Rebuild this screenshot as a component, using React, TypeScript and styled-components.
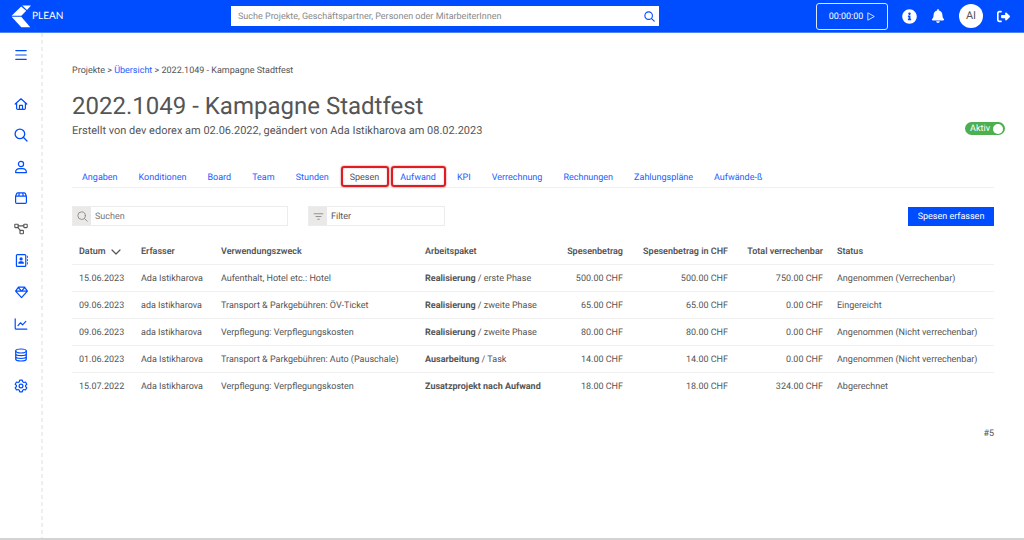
import React from "react";
import styled, { createGlobalStyle } from "styled-components";
import { FaInfoCircle, FaBell } from "react-icons/fa";
import { FaRightFromBracket, FaRegAddressBook, FaRegGem } from "react-icons/fa6";

const blue = "#004dff";
const linkBlue = "#2460ff";
const ink = "#555";
const line = "#f0f0f0";

const Global = createGlobalStyle`
  *, *::before, *::after { box-sizing: border-box; }
  body {
    margin: 0;
    background: #fff;
    color: ${ink};
    font: 9px/14px Roboto, "Liberation Sans", sans-serif;
    text-rendering: geometricPrecision;
  }
  button, input { font: inherit; color: inherit; text-rendering: inherit; }
  button { cursor: pointer; }
  a { color: ${linkBlue}; text-decoration: none; }
`;

const Page = styled.div`
  display: flex;
  flex-direction: column;
  min-height: 100vh;
  border-bottom: 2px solid #d3d3d3;
`;

const TopBar = styled.header`
  display: grid;
  grid-template-columns: 220px minmax(200px, 428px) 1fr;
  align-items: center;
  height: 33px;
  padding: 0 14px 0 11px;
  background: ${blue};
  border-bottom: 1px solid #4c83ff;
`;

const Brand = styled.a`
  display: flex;
  align-items: center;
  gap: 1px;
  color: #fff;
  font: 10px/14px Lato, sans-serif;
`;

const GlobalSearch = styled.form`
  display: flex;
  align-items: center;
  height: 20px;
  padding: 0 4px 0 7px;
  background: #fff;
`;

const BareInput = styled.input`
  flex: 1;
  min-width: 0;
  padding: 1px 0 0;
  border: 0;
  outline: 0;
  background: none;
  &::placeholder { color: #8a8a8a; opacity: 1; }
`;

const IconButton = styled.button`
  display: inline-flex;
  align-items: center;
  justify-content: center;
  padding: 0;
  border: 0;
  background: none;
  color: inherit;
`;

const SearchButton = styled(IconButton)`
  color: ${blue};
`;

const Actions = styled.div`
  display: flex;
  justify-content: flex-end;
  align-items: center;
  gap: 14px;
  color: #fff;
`;

const Timer = styled.button`
  display: flex;
  align-items: center;
  justify-content: center;
  gap: 4px;
  width: 72px;
  height: 27px;
  padding: 1px 0 0;
  border: 1px solid #dbe6ff;
  border-radius: 3px;
  background: none;
  color: #fff;
`;

const Avatar = styled.button`
  width: 24px;
  height: 24px;
  padding: 0;
  border: 0;
  border-radius: 50%;
  background: #fff;
  color: ${ink};
  font-size: 11px;
`;

const Body = styled.div`
  display: flex;
  flex: 1;
`;

const Sidebar = styled.nav`
  flex: none;
  width: 43px;
  padding-top: 15px;
  color: ${blue};
  background: repeating-linear-gradient(#eee 0 4px, transparent 4px 7px) right / 2px 100% no-repeat;
`;

const MenuButton = styled(IconButton)`
  width: 42px;
  height: 14px;
`;

const NavList = styled.ul`
  display: flex;
  flex-direction: column;
  height: 314px;
  margin: 21px 0 0;
  padding: 0;
  list-style: none;
`;

const NavItem = styled.li`
  flex: 1;
  display: flex;
`;

const NavLink = styled.a<{ $current?: boolean }>`
  display: flex;
  align-items: center;
  justify-content: center;
  width: 42px;
  color: ${(p) => (p.$current ? "#555" : blue)};
`;

const Main = styled.main`
  flex: 1;
  min-width: 0;
  padding: 31px 30px 24px 29px;
`;

const Breadcrumb = styled.nav`
  font-size: 9px;
`;

const TitleRow = styled.div`
  display: flex;
  justify-content: space-between;
  align-items: flex-end;
  margin-top: 13px;
`;

const Title = styled.h1`
  margin: 0;
  font-size: 24px;
  font-weight: 400;
  line-height: 30px;
`;

const Meta = styled.p`
  margin: 2px 0 0;
  font-size: 11px;
  line-height: 16px;
`;

const Switch = styled.label`
  display: flex;
  align-items: center;
  justify-content: flex-end;
  gap: 3px;
  width: 40px;
  height: 13px;
  margin: 0 -11px 4px 0;
  padding-right: 2px;
  border-radius: 7px;
  background: #4caf50;
  color: #fff;
  cursor: pointer;
`;

const SwitchInput = styled.input`
  appearance: none;
  width: 10px;
  height: 10px;
  margin: 0;
  border-radius: 50%;
  background: #fff;
`;

const Tabs = styled.nav`
  display: flex;
  height: 22px;
  margin-top: 27px;
  border-bottom: 1px solid ${line};
`;

const Tab = styled.a<{ $current?: boolean; $marked?: boolean }>`
  position: relative;
  padding: 5px 11px 3px 10px;
  white-space: nowrap;
  color: ${(p) => (p.$current ? ink : linkBlue)};
  ${(p) =>
    p.$marked &&
    `&::after {
      content: "";
      position: absolute;
      inset: 0 1px 0 1px;
      border: 2px solid #e01b22;
      border-radius: 3px;
      box-shadow: 0 0 2px rgba(120, 0, 0, 0.6), inset 0 0 2px rgba(120, 0, 0, 0.3);
    }`}
`;

const Toolbar = styled.div`
  display: flex;
  align-items: center;
  gap: 20px;
  margin-top: 18px;
`;

const Field = styled.label<{ $width: number }>`
  display: flex;
  align-items: center;
  width: ${(p) => p.$width}px;
  height: 20px;
  border: 1px solid #ececec;
`;

const FieldIcon = styled.span`
  display: flex;
  align-items: center;
  justify-content: center;
  width: 18px;
  height: 18px;
  margin-right: 4px;
  background: #ebe9e7;
  color: #8c8c8c;
`;

const FieldInput = styled(BareInput)`
  &::placeholder { color: #757575; }
`;

const FilterInput = styled(BareInput)`
  &::placeholder { color: ${ink}; }
`;

const Primary = styled.button`
  margin-left: auto;
  width: 86px;
  height: 19px;
  padding: 1px 0 0;
  border: 0;
  background: ${blue};
  color: #fff;
`;

const Table = styled.table`
  width: 100%;
  margin-top: 12px;
  table-layout: fixed;
  border-collapse: collapse;
`;

const Col = styled.col<{ $w?: number }>`
  width: ${(p) => (p.$w ? `${p.$w}px` : "auto")};
`;

const Th = styled.th<{ $num?: boolean }>`
  height: 26px;
  padding: 2px 7px 0;
  text-align: ${(p) => (p.$num ? "right" : "left")};
  font-weight: 600;
  white-space: nowrap;
`;

const Td = styled.td<{ $num?: boolean }>`
  height: 27px;
  padding: 2px 7px 0;
  border-top: 1px solid ${line};
  text-align: ${(p) => (p.$num ? "right" : "left")};
  white-space: nowrap;
`;

const SortButton = styled(IconButton)`
  gap: 5px;
  font-weight: 600;
`;

const Count = styled.p`
  margin: 28px 0 0;
  text-align: right;
`;

const Glyph = ({ size = 14, w = 1.2, children }: { size?: number; w?: number; children: React.ReactNode }) => (
  <svg width={size} height={size} viewBox="0 0 14 14" fill="none" stroke="currentColor" strokeWidth={w} strokeLinecap="round" strokeLinejoin="round" aria-hidden="true">
    {children}
  </svg>
);

const SearchGlyph = ({ size = 14, w = 1.2 }: { size?: number; w?: number }) => (
  <Glyph size={size} w={w}>
    <circle cx="5.9" cy="5.9" r="4.8" />
    <path d="M9.3 9.3 13 13" />
  </Glyph>
);

const navigation = [
  { label: "Start", icon: <Glyph><path d="M1.2 7 7 1.8 12.8 7M2.6 6v5.2q0 1.2 1.2 1.2h6.4q1.2 0 1.2-1.2V6M5.5 12.2V8.3h3v3.9" /></Glyph> },
  { label: "Suche", icon: <SearchGlyph w={1.3} /> },
  { label: "Personen", icon: <Glyph><circle cx="7" cy="4" r="2.6" /><path d="M1.6 12.6c0-2.4 1.8-3.9 4-3.9h2.8c2.2 0 4 1.5 4 3.9Z" /></Glyph> },
  { label: "Produkte", icon: <Glyph><path d="M1.6 5.2v6q0 1.2 1.2 1.2h8.4q1.2 0 1.2-1.2v-6L11.3 2.6q-.3-.8-1.2-.8H3.9q-.9 0-1.2.8ZM1.6 5.2h10.8M5.2 1.9l-.4 3.3M8.8 1.9l.4 3.3" /></Glyph> },
  { label: "Projekte", current: true, icon: <Glyph w={1.1}><rect x=".8" y="2.2" width="3.4" height="3.4" rx=".5" /><rect x="9.8" y="2.2" width="3.4" height="3.4" rx=".5" /><rect x="6" y="8.4" width="3.4" height="3.4" rx=".5" /><path d="M4.2 3.9h5.6M3.8 5.4 6.4 8.6" /></Glyph> },
  { label: "Kontakte", icon: <FaRegAddressBook size={13} /> },
  { label: "Angebote", icon: <FaRegGem size={13} /> },
  { label: "Auswertungen", icon: <Glyph><path d="M1.2 1.8v9.4q0 1 1 1h10.6M4 8.6l2.4-2.8 2.2 2 3.2-3.4" /></Glyph> },
  { label: "Daten", icon: <Glyph><ellipse cx="7" cy="3" rx="5.3" ry="2" /><path d="M1.7 3v8c0 1.1 2.4 2 5.3 2s5.3-.9 5.3-2V3M1.7 5.8c0 1.1 2.4 1.9 5.3 1.9s5.3-.8 5.3-1.9M1.7 8.6c0 1.1 2.4 1.9 5.3 1.9s5.3-.8 5.3-1.9" /></Glyph> },
  { label: "Einstellungen", icon: <Glyph><path d="M5.7 1.2h2.6l.4 1.6 1.2.7 1.6-.5 1.3 2.3L11.6 6.4v1.2l1.2 1.1-1.3 2.3-1.6-.5-1.2.7-.4 1.6H5.7l-.4-1.6-1.2-.7-1.6.5-1.3-2.3 1.2-1.1V6.4L1.2 5.3 2.5 3l1.6.5 1.2-.7Z" /><circle cx="7" cy="7" r="1.9" /></Glyph> },
];

const tabs = ["Angaben", "Konditionen", "Board", "Team", "Stunden", "Spesen", "Aufwand", "KPI", "Verrechnung", "Rechnungen", "Zahlungspläne", "Aufwände-ß"];

const rows = [
  ["15.06.2023", "Ada Istikharova", "Aufenthalt, Hotel etc.: Hotel", "Realisierung", " / erste Phase", "500.00", "500.00", "750.00", "Angenommen (Verrechenbar)"],
  ["09.06.2023", "ada Istikharova", "Transport & Parkgebühren: ÖV-Ticket", "Realisierung", " / zweite Phase", "65.00", "65.00", "0.00", "Eingereicht"],
  ["09.06.2023", "ada Istikharova", "Verpflegung: Verpflegungskosten", "Realisierung", " / zweite Phase", "80.00", "80.00", "0.00", "Angenommen (Nicht verrechenbar)"],
  ["01.06.2023", "Ada Istikharova", "Transport & Parkgebühren: Auto (Pauschale)", "Ausarbeitung", " / Task", "14.00", "14.00", "0.00", "Angenommen (Nicht verrechenbar)"],
  ["15.07.2022", "Ada Istikharova", "Verpflegung: Verpflegungskosten", "Zusatzprojekt nach Aufwand", "", "18.00", "18.00", "324.00", "Abgerechnet"],
];

export default function App() {
  return (
    <>
      <Global />
      <Page>
        <TopBar>
          <Brand href="#">
            <svg width="20" height="23" viewBox="0 0 20 23" fill="#fff" aria-hidden="true">
              <path d="M11.2.6H20L16 5Z" />
              <path d="M10.2 1.4 15.2 5.8 10.4 10.8H.6Z" />
              <path d="M.6 11.8h9.6L19.3 22.2h-9Z" />
            </svg>
            PLEAN
          </Brand>
          <GlobalSearch role="search">
            <BareInput type="text" aria-label="Suche" placeholder="Suche Projekte, Geschäftspartner, Personen oder MitarbeiterInnen" />
            <SearchButton type="button" aria-label="Suchen">
              <SearchGlyph size={11} w={1.4} />
            </SearchButton>
          </GlobalSearch>
          <Actions>
            <Timer type="button">
              00:00:00
              <svg width="8" height="9" viewBox="0 0 8 9" fill="none" stroke="#fff" strokeWidth=".8" strokeLinejoin="round" aria-hidden="true">
                <path d="M.8.8v7.4L7.3 4.5Z" />
              </svg>
            </Timer>
            <IconButton type="button" aria-label="Info"><FaInfoCircle size={15} /></IconButton>
            <IconButton type="button" aria-label="Benachrichtigungen"><FaBell size={14} /></IconButton>
            <Avatar type="button">AI</Avatar>
            <IconButton type="button" aria-label="Abmelden"><FaRightFromBracket size={13} /></IconButton>
          </Actions>
        </TopBar>
        <Body>
          <Sidebar aria-label="Hauptnavigation">
            <MenuButton type="button" aria-label="Menü">
              <Glyph><path d="M1.8 2.6h10.4M1.8 7h10.4M1.8 11.4h10.4" /></Glyph>
            </MenuButton>
            <NavList>
              {navigation.map((n) => (
                <NavItem key={n.label}>
                  <NavLink href="#" aria-label={n.label} $current={n.current}>{n.icon}</NavLink>
                </NavItem>
              ))}
            </NavList>
          </Sidebar>
          <Main>
            <Breadcrumb aria-label="Brotkrumen">
              Projekte &gt; <a href="#">Übersicht</a> &gt; 2022.1049 - Kampagne Stadtfest
            </Breadcrumb>
            <TitleRow>
              <div>
                <Title>2022.1049 - Kampagne Stadtfest</Title>
                <Meta>Erstellt von dev edorex am 02.06.2022, geändert von Ada Istikharova am 08.02.2023</Meta>
              </div>
              <Switch>
                Aktiv
                <SwitchInput type="checkbox" role="switch" defaultChecked />
              </Switch>
            </TitleRow>
            <Tabs aria-label="Projektbereiche">
              {tabs.map((t) => (
                <Tab key={t} href="#" $current={t === "Spesen"} $marked={t === "Spesen" || t === "Aufwand"}>{t}</Tab>
              ))}
            </Tabs>
            <Toolbar>
              <Field $width={216}>
                <FieldIcon><SearchGlyph size={11} /></FieldIcon>
                <FieldInput type="text" placeholder="Suchen" aria-label="Suchen" />
              </Field>
              <Field $width={137}>
                <FieldIcon><Glyph size={11}><path d="M1.5 3.5h11M3.8 7h6.4M6 10.5h2" /></Glyph></FieldIcon>
                <FilterInput type="text" placeholder="Filter" aria-label="Filter" />
              </Field>
              <Primary type="button">Spesen erfassen</Primary>
            </Toolbar>
            <Table>
              <colgroup>
                <Col $w={62} /><Col $w={80} /><Col $w={204} /><Col $w={140} /><Col $w={72} /><Col $w={105} /><Col $w={95} /><Col />
              </colgroup>
              <thead>
                <tr>
                  <Th>
                    <SortButton type="button">
                      Datum
                      <svg width="10" height="6" viewBox="0 0 10 6" fill="none" stroke="currentColor" strokeWidth="1.2" strokeLinecap="round" strokeLinejoin="round" aria-hidden="true">
                        <path d="M1 1l4 4 4-4" />
                      </svg>
                    </SortButton>
                  </Th>
                  <Th>Erfasser</Th>
                  <Th>Verwendungszweck</Th>
                  <Th>Arbeitspaket</Th>
                  <Th $num>Spesenbetrag</Th>
                  <Th $num>Spesenbetrag in CHF</Th>
                  <Th $num>Total verrechenbar</Th>
                  <Th>Status</Th>
                </tr>
              </thead>
              <tbody>
                {rows.map(([date, person, purpose, pkg, phase, amount, chf, total, status], i) => (
                  <tr key={i}>
                    <Td>{date}</Td>
                    <Td>{person}</Td>
                    <Td>{purpose}</Td>
                    <Td><b>{pkg}</b>{phase}</Td>
                    <Td $num>{amount} CHF</Td>
                    <Td $num>{chf} CHF</Td>
                    <Td $num>{total} CHF</Td>
                    <Td>{status}</Td>
                  </tr>
                ))}
              </tbody>
            </Table>
            <Count>#5</Count>
          </Main>
        </Body>
      </Page>
    </>
  );
}
